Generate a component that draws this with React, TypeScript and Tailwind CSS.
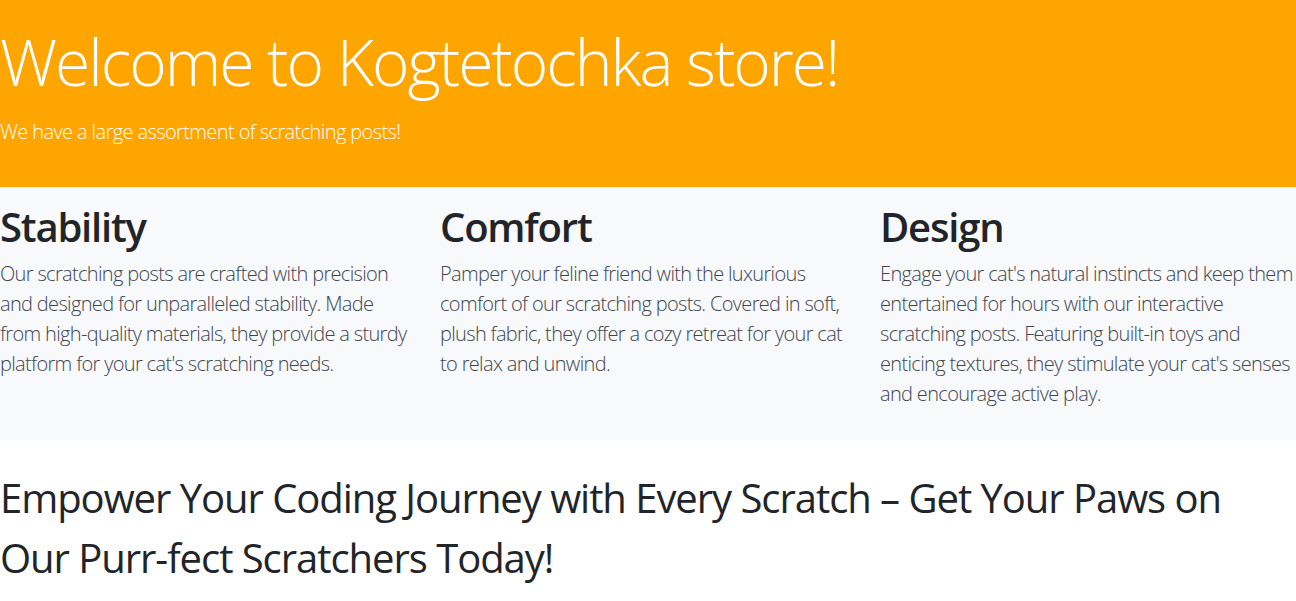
const features = [
  {
    title: "Stability",
    text: "Our scratching posts are crafted with precision and designed for unparalleled stability. Made from high-quality materials, they provide a sturdy platform for your cat's scratching needs.",
  },
  {
    title: "Comfort",
    text: "Pamper your feline friend with the luxurious comfort of our scratching posts. Covered in soft, plush fabric, they offer a cozy retreat for your cat to relax and unwind.",
  },
  {
    title: "Design",
    text: "Engage your cat's natural instincts and keep them entertained for hours with our interactive scratching posts. Featuring built-in toys and enticing textures, they stimulate your cat's senses and encourage active play.",
  },
];

export default function App() {
  return (
    <div className="min-h-screen bg-white font-['Open_Sans',sans-serif] text-[#212529]">
      {/* Hero */}
      <header className="bg-[#ffa500] pt-6 pb-10 text-white">
        <h1 className="text-[64px] font-light leading-[1.2] tracking-[-0.031em]">Welcome to Kogtetochka store!</h1>
        <p className="mt-4 text-[20px] font-light leading-[1.5] tracking-[-0.03em]">
          We have a large assortment of scratching posts!
        </p>
      </header>

      {/* Features */}
      <section className="bg-[#f8f9fa] pt-4 pb-[31px]">
        <div className="grid grid-cols-3 gap-6">
          {features.map((f) => (
            <div key={f.title}>
              <h2 className="mb-2 text-[40px] font-semibold leading-[1.2] tracking-[-0.03em]">{f.title}</h2>
              <p className="text-[20px] font-light leading-[1.5] tracking-[-0.033em] text-[#3e4650]">{f.text}</p>
            </div>
          ))}
        </div>
      </section>

      {/* Call to action */}
      <section className="pt-[28px]">
        <h2 className="text-[40px] font-normal leading-[1.5] tracking-[-0.026em]">
          Empower Your Coding Journey with Every Scratch – Get Your Paws on Our Purr-fect Scratchers Today!
        </h2>
      </section>
    </div>
  );
}
